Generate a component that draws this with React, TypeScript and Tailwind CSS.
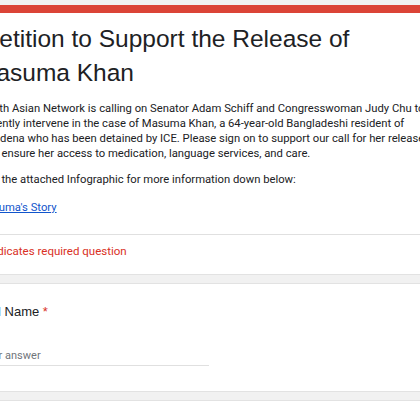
import React from "react";

// each line of the description, with a small nudge to match the cut at the left edge
const DESC_LINES: { text: string; cls: string }[] = [
  { text: "South Asian Network is calling on Senator Adam Schiff and Congresswoman Judy Chu to", cls: "" },
  { text: "urgently intervene in the case of Masuma Khan, a 64-year-old Bangladeshi resident of", cls: "" },
  { text: "Pasadena who has been detained by ICE. Please sign on to support our call for her release", cls: "-ml-[5px]" },
  { text: "and ensure her access to medication, language services, and care.", cls: "" },
];

function Band() {
  return <div className="h-[10px] bg-[#f1f1f1] border-y border-[#e2e2e2]" />;
}

export default function App() {
  return (
    <div className="w-[420px] h-[420px] overflow-hidden bg-white" style={{ fontFamily: "Roboto, sans-serif" }}>
      <div className="h-[5px] bg-[#f1f1f1]" />
      <div className="h-[8px] bg-[#db4437]" />

      {/* header card */}
      <div className="-ml-[20px] w-[480px]">
        <div className="pt-[9px] pl-[3px] text-[24.5px] leading-[34px] text-[#202124] font-['Liberation_Sans',Arial,sans-serif]">
          <div className="whitespace-nowrap">Petition to Support the Release of</div>
          <div className="-ml-[7px] whitespace-nowrap">Masuma Khan</div>
        </div>

        <div className="mt-[11px] text-[11.25px] leading-[15px] text-[#202124]">
          {DESC_LINES.map((l, i) => (
            <div key={i} className={"whitespace-nowrap " + l.cls}>{l.text}</div>
          ))}
        </div>
        <div className="mt-[11px] text-[11.25px] leading-[15px] text-[#202124] whitespace-nowrap">
          See the attached Infographic for more information down below:
        </div>
        <div className="mt-[13px] -ml-[3px] text-[11.25px] leading-[15px]">
          <a className="text-[#1155cc] underline">Masuma's Story</a>
        </div>

        <div className="mt-[19px] h-px bg-[#e0e0e0]" />
        <div className="pt-[9px] pb-[15px] text-[11.5px] leading-[15px] text-[#d93025] whitespace-nowrap">
          * Indicates required question
        </div>
      </div>

      <Band />

      {/* question card */}
      <div className="-ml-[20px] w-[480px] pt-[18px] pb-[25px]">
        <div className="text-[13px] leading-[20px] text-[#202124] font-['Liberation_Sans',Arial,sans-serif]">
          Full Name <span className="text-[#d93025]">*</span>
        </div>
        <div className="mt-[26px] w-[229px] pb-[2px] border-b border-[#e0e0e0] text-[11px] leading-[15px] text-[#70757a]">
          Your answer
        </div>
      </div>

      <Band />
    </div>
  );
}
